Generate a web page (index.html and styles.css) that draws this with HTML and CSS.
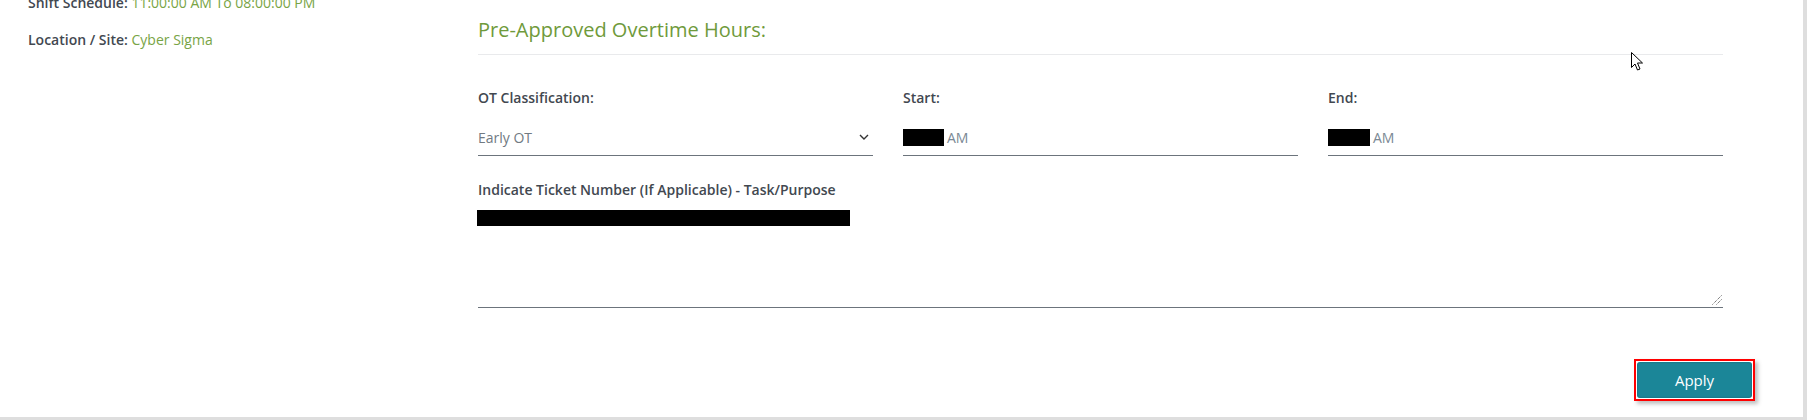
FILE: index.html
```html
<!DOCTYPE html>
<html>
<head>
<meta charset="utf-8">
<link rel="stylesheet" href="styles.css">
</head>
<body>
<div class="card">
  <div class="main">
    <div class="left">
      <p class="info first"><span class="lbl">Shift Schedule:</span> <span class="val">11:00:00 AM To 08:00:00 PM</span></p>
      <p class="info"><span class="lbl">Location / Site:</span> <span class="val">Cyber Sigma</span></p>
    </div>
    <div class="right">
      <h2 class="heading">Pre-Approved Overtime Hours:</h2>
      <div class="row">
        <div class="field">
          <div class="label">OT Classification:</div>
          <div class="control select">
            <span class="muted">Early OT</span>
            <svg class="chev" width="10" height="6" viewBox="0 0 10 6"><path d="M1 1 L5 5 L9 1" fill="none" stroke="#333" stroke-width="1.4"/></svg>
          </div>
        </div>
        <div class="field">
          <div class="label">Start:</div>
          <div class="control"><span class="redact r1"></span><span class="muted am">AM</span></div>
        </div>
        <div class="field">
          <div class="label">End:</div>
          <div class="control"><span class="redact r2"></span><span class="muted am">AM</span></div>
        </div>
      </div>
      <div class="label ticket">Indicate Ticket Number (If Applicable) - Task/Purpose</div>
      <div class="textarea">
        <span class="redact r3"></span>
        <svg class="grip" width="10" height="10" viewBox="0 0 10 10"><path d="M9.5 0.5 L0.5 9.5 M9.5 4.5 L4.5 9.5" stroke="#444" stroke-width="1" stroke-dasharray="1 1" fill="none"/></svg>
      </div>
    </div>
  </div>
  <div class="footer">
    <div class="frame"><button class="apply">Apply</button></div>
  </div>
  <svg class="cursor" width="14" height="20" viewBox="0 0 14 20"><path d="M0.5 0.5 L0.5 15.5 L4 12 L6.5 18 L9 17 L6.5 11 L11.5 11 Z" fill="#fff" stroke="#000" stroke-width="1"/></svg>
</div>
</body>
</html>
```

FILE: styles.css
```css
html, body {
  margin: 0;
  padding: 0;
  background: #dedede;
}
body {
  width: 1807px;
  height: 420px;
  overflow: hidden;
  font-family: "Open Sans", "Liberation Sans", sans-serif;
}
.card {
  position: relative;
  width: 1803px;
  height: 417px;
  background: #fff;
  display: flex;
  flex-direction: column;
  overflow: hidden;
}
.main {
  display: flex;
}
.left {
  width: 450px;
  padding-left: 28px;
}
.info {
  margin: 17px 0 0;
  font-size: 14px;
  line-height: 20px;
}
.info.first {
  margin-top: -7px;
}
.lbl {
  font-weight: 600;
  color: #424850;
}
.val {
  color: #78a445;
}
.right {
  width: 1245px;
}
.heading {
  margin: 16px 0 0;
  padding-bottom: 10px;
  border-bottom: 1px solid #e9eaec;
  font-size: 20px;
  line-height: 28px;
  font-weight: 400;
  color: #6f9a3b;
}
.row {
  display: flex;
  gap: 30px;
  margin-top: 33px;
}
.field {
  width: 395px;
}
.label {
  font-size: 14px;
  line-height: 20px;
  font-weight: 600;
  color: #424850;
}
.control {
  margin-top: 10px;
  height: 38px;
  box-sizing: border-box;
  padding-top: 1px;
  border-bottom: 1px solid #6c747c;
  display: flex;
  align-items: center;
  font-size: 14px;
}
.select {
  justify-content: space-between;
  padding-right: 4px;
}
.chev {
  margin-top: 0;
}
.muted {
  color: #717a82;
}
.am {
  margin-left: 3px;
  color: #7a8894;
}
.redact {
  display: inline-block;
  background: #000;
  height: 17px;
}
.r1 { width: 41px; }
.r2 { width: 42px; }
.ticket {
  margin-top: 24px;
}
.textarea {
  position: relative;
  margin-top: 2px;
  height: 106px;
  box-sizing: border-box;
  padding-top: 8px;
  border-bottom: 1px solid #6c747c;
}
.r3 {
  display: block;
  width: 373px;
  height: 16px;
  margin-left: -1px;
}
.grip {
  position: absolute;
  right: 1px;
  bottom: 2px;
}
.footer {
  display: flex;
  justify-content: flex-end;
  padding-right: 48px;
  margin-top: 51px;
}
.frame {
  border: 2px solid #ff0000;
  padding: 1px;
  box-shadow: 3px 3px 4px rgba(0, 0, 0, 0.25);
}
.apply {
  display: block;
  width: 115px;
  height: 36px;
  border: none;
  border-radius: 3px;
  background: #1b8698;
  color: #fff;
  font-family: "Open Sans", "Liberation Sans", sans-serif;
  font-size: 15px;
  padding: 0;
  box-shadow: inset 0 0 2px rgba(0, 0, 0, 0.3);
}
.cursor {
  position: absolute;
  left: 1631px;
  top: 52px;
}
```
